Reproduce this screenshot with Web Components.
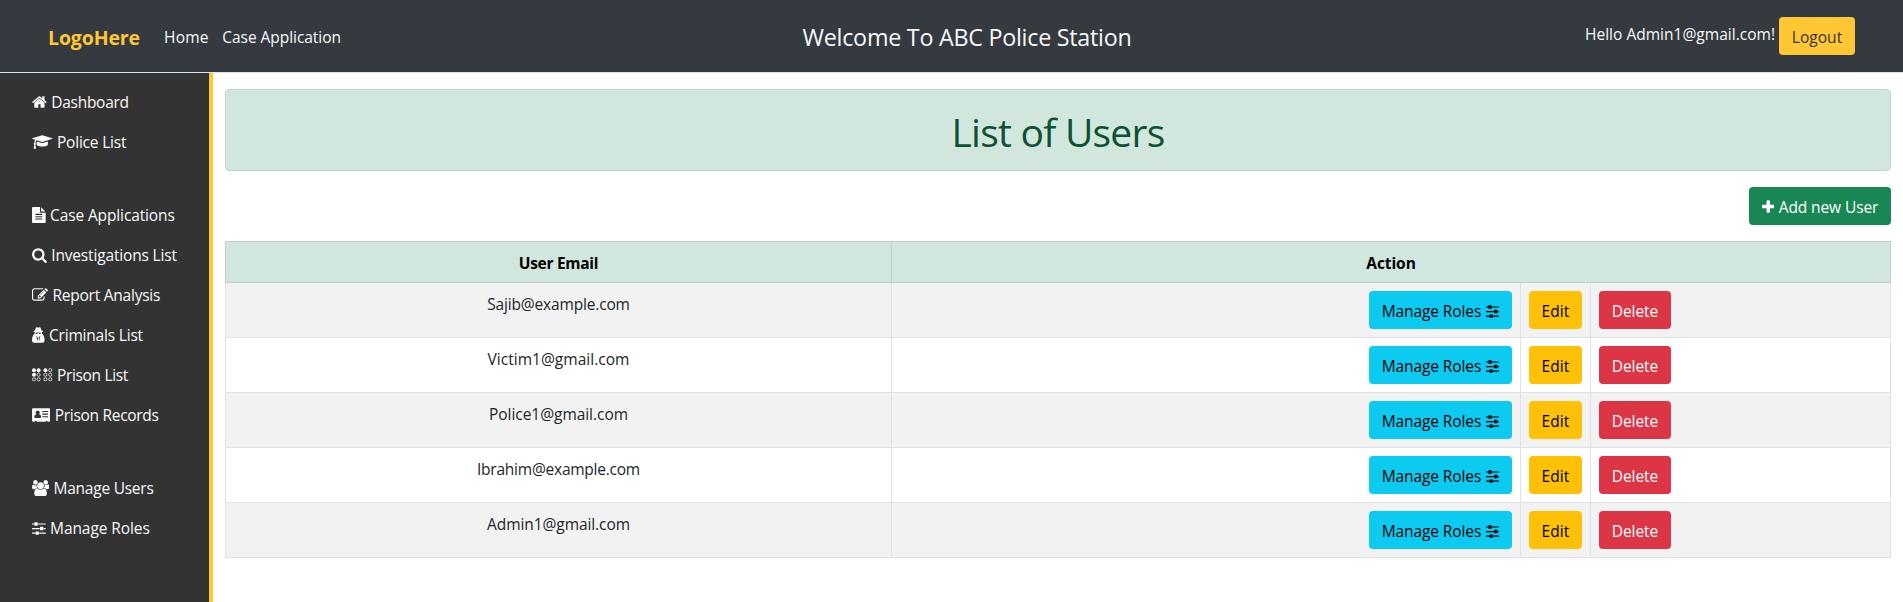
<!DOCTYPE html>
<html lang="en">
<head>
<meta charset="utf-8">
<title>ABC Police Station</title>
<style>
body{margin:0;background:#fff;color:#212529;font:15.5px/26px "Open Sans","Noto Sans",sans-serif;height:602px;overflow:hidden}
</style>
</head>
<body>
<police-app></police-app>
<script>
const define = (name, html, setup) => customElements.define(name, class extends HTMLElement {
  connectedCallback() {
    if (this.shadowRoot) return;
    const root = this.attachShadow({ mode: 'open' });
    const t = document.createElement('template');
    t.innerHTML = typeof html === 'function' ? html(this) : html;
    root.append(t.content.cloneNode(true));
    if (setup) setup(this, root);
  }
});

// Single-line label; the tracking is tuned so that the line is `w` pixels wide.
define('fit-text', '<style>:host{display:block;flex:none;white-space:pre;margin-bottom:-2px}span{display:inline-block}</style><span><slot></slot></span>', (el, root) => {
  const w = parseFloat(el.getAttribute('w'));
  if (!w) return;
  const span = root.querySelector('span');
  const n = el.textContent.length;
  span.style.letterSpacing = (w - span.getBoundingClientRect().width) / n + 'px';
  el.style.width = w + 'px';
});

// name: [left edge, advance width, markup] on a 1792-unit em
const ICONS = {
  home: [64, 1664, '<path d="M1472 992v480q0 26-19 45t-45 19h-384v-384h-256v384h-384q-26 0-45-19t-19-45v-480q0-1 .5-3t.5-3l575-474 575 474q1 2 1 6zm223-69l-62 74q-8 9-21 11h-3q-13 0-21-7l-692-577-692 577q-12 8-24 7-13-2-21-11l-62-74q-8-10-7-23.5t11-21.5l719-599q32-26 76-26t76 26l244 204v-195q0-14 9-23t23-9h192q14 0 23 9t9 23v408l219 182q10 8 11 21.5t-7 23.5z"/>'],
  cap: [0, 2304, '<path d="M1774 836l18 316q4 69-82 128t-235 93.5-323 34.5-323-34.5-235-93.5-82-128l18-316 574 181q22 7 48 7t48-7zm530-324q0 23-22 31l-1120 352q-4 1-10 1t-10-1l-652-206q-43 34-71 111.5t-34 178.5q63 36 63 109 0 69-58 107l58 433q2 14-8 25-9 11-24 11h-192q-15 0-24-11-10-11-8-25l58-433q-58-38-58-107 0-73 65-111 11-207 98-330l-333-104q-22-8-22-31t22-31l1120-352q4-1 10-1t10 1l1120 352q22 8 22 31z"/>'],
  file: [128, 1536, '<path d="M1596 476q14 14 28 36h-472v-472q22 14 36 28zm-476 164h544v1056q0 40-28 68t-68 28h-1344q-40 0-68-28t-28-68v-1600q0-40 28-68t68-28h800v544q0 40 28 68t68 28zm160 736v-64q0-14-9-23t-23-9h-704q-14 0-23 9t-9 23v64q0 14 9 23t23 9h704q14 0 23-9t9-23zm0-256v-64q0-14-9-23t-23-9h-704q-14 0-23 9t-9 23v64q0 14 9 23t23 9h704q14 0 23-9t9-23zm0-256v-64q0-14-9-23t-23-9h-704q-14 0-23 9t-9 23v64q0 14 9 23t23 9h704q14 0 23-9t9-23z"/>'],
  search: [64, 1664, '<path d="M1216 832q0-185-131.5-316.5t-316.5-131.5-316.5 131.5-131.5 316.5 131.5 316.5 316.5 131.5 316.5-131.5 131.5-316.5zm512 832q0 52-38 90t-90 38q-54 0-90-38l-343-342q-179 124-399 124-143 0-273.5-55.5t-225-150-150-225-55.5-273.5 55.5-273.5 150-225 225-150 273.5-55.5 273.5 55.5 225 150 150 225 55.5 273.5q0 220-124 399l343 343q37 37 37 90z"/>'],
  edit: [0, 1792, '<path d="M888 1184l116-116-152-152-116 116v56h96v96h56zm440-720q-16-16-33 1l-350 350q-17 17-1 33t33-1l350-350q17-17 1-33zm80 594v190q0 119-84.5 203.5t-203.5 84.5h-832q-119 0-203.5-84.5t-84.5-203.5v-832q0-119 84.5-203.5t203.5-84.5h832q63 0 117 25 15 7 18 23 3 17-9 29l-49 49q-14 14-32 8-23-6-45-6h-832q-66 0-113 47t-47 113v832q0 66 47 113t113 47h832q66 0 113-47t47-113v-126q0-13 9-22l64-64q15-15 35-7t20 29zm-96-738l288 288-672 672h-288v-288zm444 132l-92 92-288-288 92-92q28-28 68-28t68 28l152 152q28 28 28 68t-28 68z"/>'],
  secret: [0, 1408, '<path fill-rule="evenodd" d="M340 380L420 120Q450 0 550 20Q700 80 850 20Q950 0 980 120L1060 380Q1240 410 1240 470Q1240 530 1100 560Q1110 640 1110 740L1300 960Q1408 1200 1408 1500Q1408 1760 1180 1760H228Q0 1760 0 1500Q0 1200 108 960L300 740Q290 640 300 560Q160 530 160 470Q160 410 340 380zM400 650Q420 790 530 790Q620 790 650 680H750Q780 790 870 790Q980 790 1000 650Q700 600 400 650zM470 980L610 1600L660 1250L600 1110zM930 980L790 1600L740 1250L800 1110z"/>'],
  braille: [0, 2304, [[0,0,1],[1,0,1],[0,1,1],[1,1,0],[0,2,0],[1,2,0],[2,0,1],[3,0,0],[2,1,0],[3,1,0],[2,2,0],[3,2,0]].map(([c, r, f]) => `<circle cx="${[224,736,1504,2048][c]}" cy="${[352,864,1376][r]}" r="${f ? 224 : 180}"${f ? '' : ' fill="none" stroke="currentColor" stroke-width="85"'}/>`).join('')],
  card: [0, 2048, '<path fill-rule="evenodd" d="M150 128H1898Q2048 128 2048 278V1500Q2048 1650 1898 1650H1728V1570H1536V1650H512V1570H320V1650H150Q0 1650 0 1500V278Q0 128 150 128zM640 420A200 220 0 0 0 500 820Q256 830 256 1110Q256 1230 370 1230H910Q1024 1230 1024 1110Q1024 830 780 820A200 220 0 0 0 640 420zM1152 440V560H1792V440zM1152 740V860H1792V740zM1152 1040V1160H1792V1040z"/>'],
  users: [0, 1920, '<path d="M593 896q-162 5-265 128h-134q-82 0-138-40.5t-56-118.5q0-353 124-353 6 0 43.5 21t97.5 42.5 119 21.5q67 0 133-23-5 37-5 66 0 159 93 292zm1071 637q0 120-73 189.5t-194 69.5h-874q-121 0-194-69.5t-73-189.5q0-53 3.5-103.5t14-109 26.5-108.5 43-97.5 62-81 85.5-53.5 111.5-20q10 0 43 21.5t73 48 107 48 135 21.5 135-21.5 107-48 73-48 43-21.5q61 0 111.5 20t85.5 53.5 62 81 43 97.5 26.5 108.5 14 109 3.5 103.5zm-1024-1277q0 106-75 181t-181 75-181-75-75-181 75-181 181-75 181 75 75 181zm704 384q0 159-112.5 271.5t-271.5 112.5-271.5-112.5-112.5-271.5 112.5-271.5 271.5-112.5 271.5 112.5 112.5 271.5zm576 225q0 78-56 118.5t-138 40.5h-134q-103-123-265-128 93-133 93-292 0-29-5-66 66 23 133 23 59 0 119-21.5t97.5-42.5 43.5-21q124 0 124 353zm-128-609q0 106-75 181t-181 75-181-75-75-181 75-181 181-75 181 75 75 181z"/>'],
  sliders: [128, 1536, '<path d="M480 1408v128h-352v-128h352zm352-128q26 0 45 19t19 45v256q0 26-19 45t-45 19h-256q-26 0-45-19t-19-45v-256q0-26 19-45t45-19h256zm160-384v128h-864v-128h864zm-640-512v128h-224v-128h224zm1312 1024v128h-736v-128h736zm-960-1152q26 0 45 19t19 45v256q0 26-19 45t-45 19h-256q-26 0-45-19t-19-45v-256q0-26 19-45t45-19h256zm640 512q26 0 45 19t19 45v256q0 26-19 45t-45 19h-256q-26 0-45-19t-19-45v-256q0-26 19-45t45-19h256zm320 128v128h-224v-128h224zm0-512v128h-864v-128h864z"/>'],
  plus: [192, 1408, '<path d="M1600 736v192q0 40-28 68t-68 28h-416v416q0 40-28 68t-68 28h-192q-40 0-68-28t-28-68v-416h-416q-40 0-68-28t-28-68v-192q0-40 28-68t68-28h416v-416q0-40 28-68t68-28h192q40 0 68 28t28 68v416h416q40 0 68 28t28 68z"/>']
};
define('ui-icon', el => {
  const [x, w, body] = ICONS[el.getAttribute('name')];
  const px = w / 112;
  return `<style>:host{display:block;flex:none;width:${px}px;height:16px;margin-top:5.3px}svg{display:block}</style><svg width="${px}" height="16" viewBox="${x} 0 ${w} 1792" fill="currentColor">${body}</svg>`;
});

define('ui-button', el => `<style>
:host{display:flex;flex:none;box-sizing:border-box;height:38px;padding:7px 13px 0;gap:4.4px;border-radius:4px;justify-content:center;align-items:flex-start;width:${el.getAttribute('width')}px}
:host([kind=info]){background:#0dcaf0;color:#000}
:host([kind=warning]){background:#ffc107;color:#000}
:host([kind=danger]){background:#dc3545;color:#fff}
:host([kind=success]){background:#198754;color:#fff}
:host([kind=logout]){background:#ffc733;color:#333}
</style><slot></slot>`);

define('top-bar', `<style>
:host{display:grid;grid-template-columns:1fr auto 1fr;box-sizing:border-box;height:73px;padding:0 48px;background:#343a40;color:#f8f9fa;border-bottom:1px solid #dee2e6}
div{display:flex;align-items:flex-start}
.left{padding-top:24px}
.logo{color:#ffc733;font-weight:700;font-size:19.5px;line-height:28px;margin-right:24px}
.home{margin-right:13.5px}
.title{font-size:23.3px;line-height:32px;padding:21px 0 0 31px}
.right{justify-content:flex-end;padding-top:17px}
.hello{padding-top:4px;margin-right:4px}
</style>
<div class="left"><fit-text class="logo" w="92">LogoHere</fit-text><fit-text class="home" w="44.8">Home</fit-text><fit-text w="118.6">Case Application</fit-text></div>
<div class="title"><fit-text w="329">Welcome To ABC Police Station</fit-text></div>
<div class="right"><fit-text class="hello" w="190">Hello Admin1@gmail.com!</fit-text><ui-button kind="logout" width="76"><fit-text w="50.5">Logout</fit-text></ui-button></div>`);

define('side-link', el => `<style>:host{display:flex;align-items:flex-start;gap:4.4px;height:40px;padding-left:32px}</style>
<ui-icon name="${el.getAttribute('icon')}"></ui-icon><fit-text w="${el.getAttribute('w')}">${el.textContent}</fit-text>`);

define('side-bar', `<style>:host{display:block;box-sizing:border-box;width:213px;padding-top:16px;background:#333;color:#f8f9fa;border-right:4px solid #ffc733}
nav{margin-bottom:33px}</style>
<nav><side-link icon="home" w="77.5">Dashboard</side-link><side-link icon="cap" w="69.3">Police List</side-link></nav>
<nav><side-link icon="file" w="124.6">Case Applications</side-link><side-link icon="search" w="125.6">Investigations List</side-link><side-link icon="edit" w="107.8">Report Analysis</side-link><side-link icon="secret" w="94">Criminals List</side-link><side-link icon="braille" w="71">Prison List</side-link><side-link icon="card" w="104">Prison Records</side-link></nav>
<nav><side-link icon="users" w="100">Manage Users</side-link><side-link icon="sliders" w="99.6">Manage Roles</side-link></nav>`);

define('user-row', el => `<style>
:host{display:grid;grid-template-columns:666px 629px 70px 301px;box-sizing:border-box;height:55px;border-bottom:1px solid #dee2e6}
:host(:nth-of-type(odd)){background:#f2f2f2}
div{display:flex;align-items:flex-start;box-sizing:border-box;padding:8px;border-left:1px solid #dee2e6}
.mail{justify-content:center}.roles{justify-content:flex-end}.del{border-right:1px solid #dee2e6}
</style>
<div class="mail"><fit-text w="${el.getAttribute('w')}">${el.getAttribute('email')}</fit-text></div>
<div class="roles"><ui-button kind="info" width="143"><fit-text w="99.6">Manage Roles</fit-text><ui-icon name="sliders"></ui-icon></ui-button></div>
<div><ui-button kind="warning" width="53"><fit-text w="28">Edit</fit-text></ui-button></div>
<div class="del"><ui-button kind="danger" width="72"><fit-text w="46.5">Delete</fit-text></ui-button></div>`);

define('user-table', `<style>
:host{display:block;margin-top:16px}
.head{display:grid;grid-template-columns:666px 1000px;height:40px;border:1px solid #bcd0c7;border-width:1px 0;background:#d1e7dd;color:#000;font-weight:700}
.head div{display:flex;justify-content:center;box-sizing:border-box;padding-top:8px;border-left:1px solid #bcd0c7}
.head div:last-child{border-right:1px solid #bcd0c7}
</style>
<div class="head"><div><fit-text w="79.5">User Email</fit-text></div><div><fit-text w="49.5">Action</fit-text></div></div>
<user-row email="Sajib@example.com" w="142.6"></user-row>
<user-row email="Victim1@gmail.com" w="142"></user-row>
<user-row email="Police1@gmail.com" w="139"></user-row>
<user-row email="Ibrahim@example.com" w="163"></user-row>
<user-row email="Admin1@gmail.com" w="143"></user-row>`);

define('page-title', `<style>:host{display:flex;justify-content:center;box-sizing:border-box;height:82px;padding-top:16px;background:#d1e7dd;color:#0f5132;border:1px solid #badbcc;border-radius:4px;font-size:39px;line-height:52px}</style><slot></slot>`);

define('police-app', `<style>
:host{display:flex;flex-direction:column;height:602px}
.body{display:flex;flex:1}
main{flex:1;padding:16px 12px 0}
.tools{display:flex;justify-content:flex-end;margin-top:16px}
</style>
<top-bar></top-bar>
<div class="body"><side-bar></side-bar>
<main><page-title><fit-text w="213">List of Users</fit-text></page-title>
<div class="tools"><ui-button kind="success" width="142"><ui-icon name="plus"></ui-icon><fit-text w="99.5">Add new User</fit-text></ui-button></div>
<user-table></user-table></main></div>`);
</script>
</body>
</html>
